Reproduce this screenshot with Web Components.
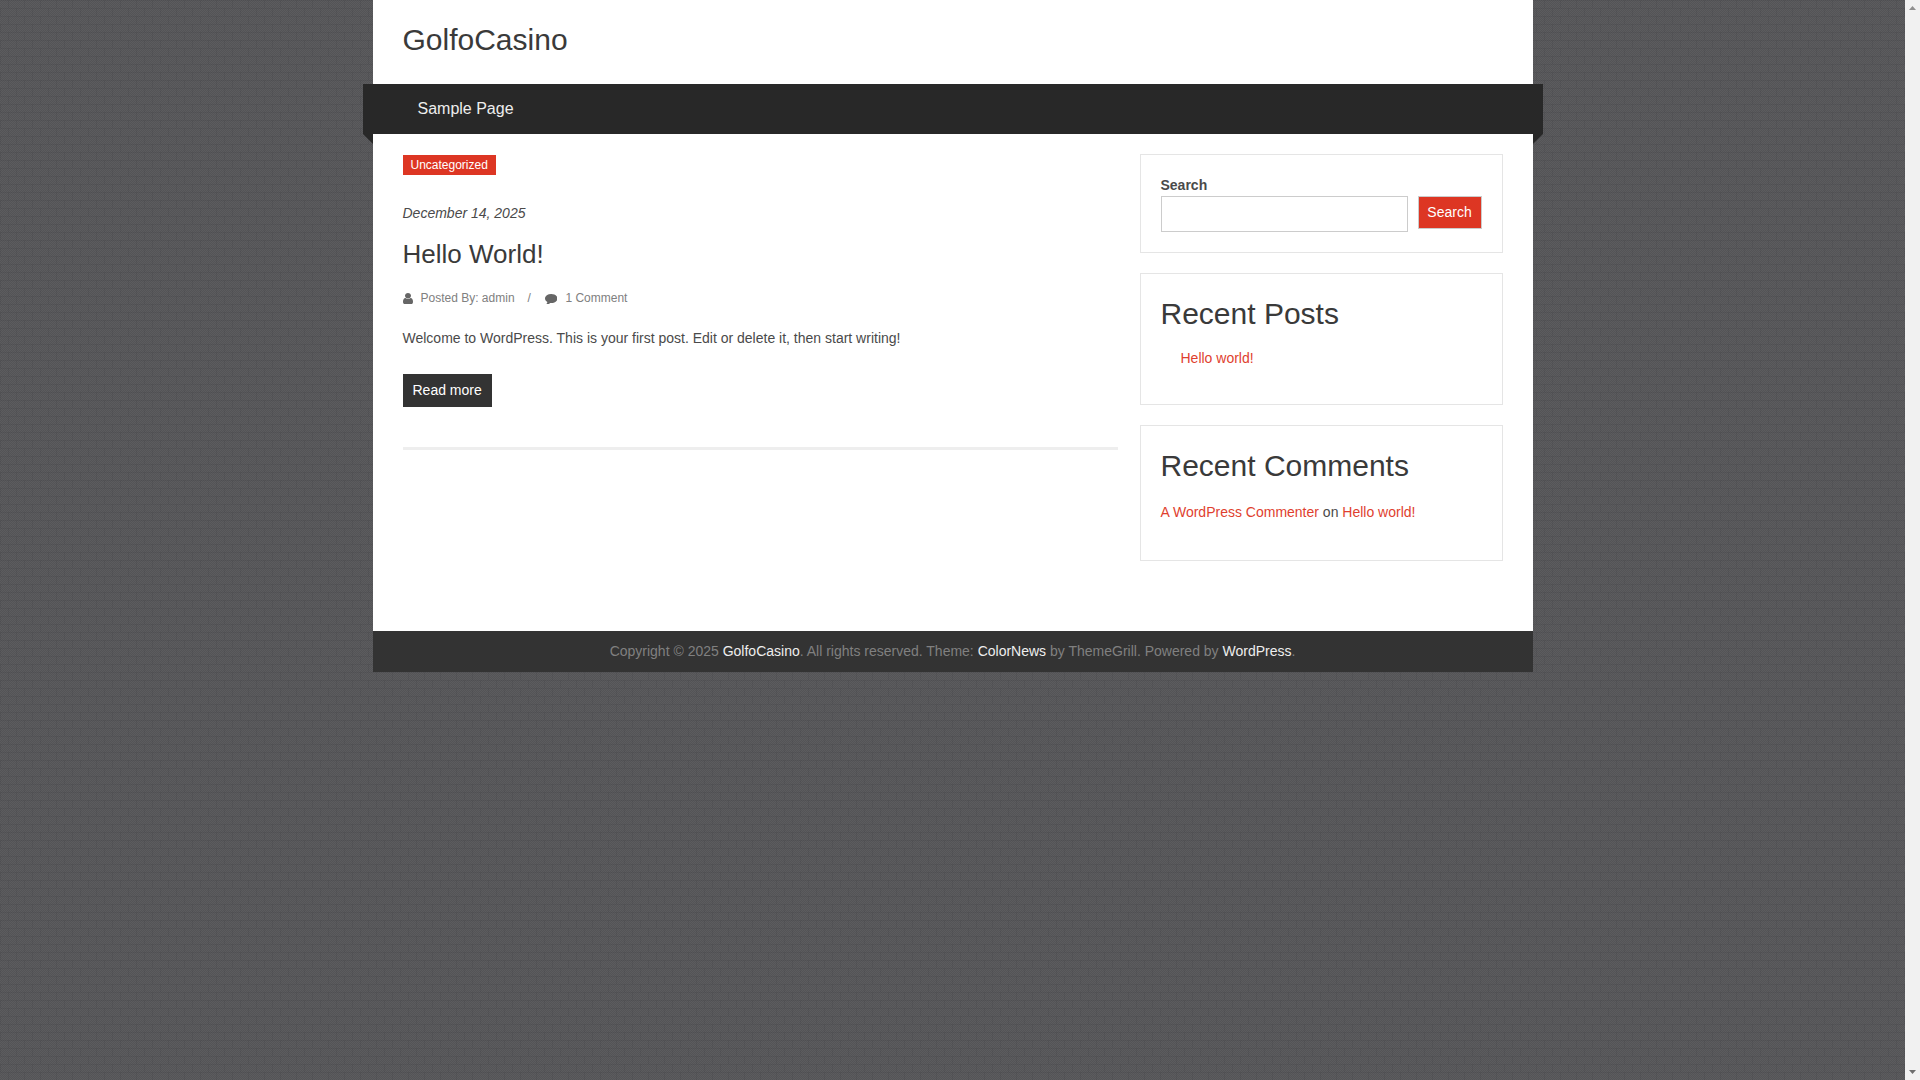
<!DOCTYPE html>
<html lang="en">
<head>
<meta charset="utf-8">
<title>GolfoCasino</title>
<style>
  html, body { margin: 0; padding: 0; height: 100%; overflow: hidden; }
  body { font-family: "Liberation Sans", Arial, sans-serif; }
</style>
</head>
<body>
<template id="page-tpl">
  <style>
    :host {
      display: grid;
      grid-template-columns: 1fr 15px;
      height: 1080px;
      background-color: #5c5c5f;
      background-image:
        conic-gradient(rgba(0,0,0,.09) 25%, transparent 0 50%, rgba(0,0,0,.09) 0 75%, transparent 0),
        linear-gradient(rgba(0,0,0,.05) 1px, transparent 1px),
        conic-gradient(at 1px 8px, transparent 0 180deg, rgba(0,0,0,.05) 180deg 270deg, transparent 270deg),
        conic-gradient(at 1px 8px, transparent 0 180deg, rgba(0,0,0,.05) 180deg 270deg, transparent 270deg);
      background-size: 2px 2px, 16px 8px, 16px 16px, 16px 16px;
      background-position: 0 0, 0 0, 0 0, 8px 8px;
      color: #4a4a4a;
      font: 14px/1.6 "Liberation Sans", Arial, sans-serif;
    }
    .wrap { width: 1160px; margin: 0 auto; background: #fff; align-self: start; }
  </style>
  <div class="wrap"><slot></slot></div>
  <gc-scrollbar></gc-scrollbar>
</template>

<template id="scrollbar-tpl">
  <style>
    :host { display: flex; flex-direction: column; justify-content: space-between; align-items: center; background: #f1f1f1; height: 1080px; }
    svg { display: block; width: 15px; height: 15px; }
  </style>
  <svg viewBox="0 0 15 15"><path d="M4 10 7.500 6 11 10z" fill="#8f8f8f"/></svg>
  <svg viewBox="0 0 15 15"><path d="M4 5 7.500 9 11 5z" fill="#6e6e6e"/></svg>
</template>

<template id="header-tpl">
  <style>
    :host { display: block; }
    .brand { height: 84px; box-sizing: border-box; padding: 0 30px 6px; display: flex; align-items: center; }
    h1 { margin: 0; font-size: 30px; font-weight: 400; line-height: 1.3; color: #3a3a3a; }
    nav { position: relative; margin: 0 -10px; height: 50px; background: #282828; padding: 0 40px; display: flex; align-items: center; }
    nav a { color: #eee; font-size: 16px; padding: 0 15px; text-decoration: none; }
    nav::before, nav::after { content: ""; position: absolute; top: 100%; width: 0; height: 0; border-top: 10px solid #282828; }
    nav::before { left: 0; border-left: 10px solid transparent; }
    nav::after { right: 0; border-right: 10px solid transparent; }
  </style>
  <div class="brand"><h1>GolfoCasino</h1></div>
  <nav><a href="#">Sample Page</a></nav>
</template>

<template id="post-tpl">
  <style>
    :host { display: block; padding-top: 1px; }
    .cat { display: block; width: fit-content; background: #dd3623; color: #fff; font-size: 12px; line-height: 20px; height: 20px; padding: 0 8px; }
    .date { margin-top: 26px; font-style: italic; font-size: 14px; line-height: 24px; }
    h2 { margin: 9px 0 0; font-size: 26px; font-weight: 400; line-height: 40px; color: #3a3a3a; }
    .meta { margin-top: 14px; display: flex; align-items: center; font-size: 12px; line-height: 20px; color: #808080; }
    .meta svg { display: block; fill: #666; }
    .meta .u { width: 10px; height: 11px; margin-right: 8px; }
    .meta .c { width: 12.500px; height: 11px; margin-right: 8px; }
    .meta .sep { margin: 0 14px 0 13px; }
    p { margin: 19px 0 0; line-height: 22px; }
    .more { display: block; width: fit-content; margin-top: 25px; background: #333; color: #fff; text-decoration: none; line-height: 33px; padding: 0 10px; }
    hr { border: 0; height: 3px; background: #eee; margin: 40px 0 0; }
  </style>
  <a class="cat">Uncategorized</a>
  <div class="date">December 14, 2025</div>
  <h2>Hello World!</h2>
  <div class="meta">
    <svg class="u" viewBox="256 128 1280 1536" preserveAspectRatio="none"><path d="M1536 1399q0 109-62.500 187t-150.500 78h-854q-88 0-150.500-78t-62.500-187q0-85 8.500-160.500t31.500-152 58.500-131 94-89 134.500-34.500q131 128 313 128t313-128q76 0 134.500 34.500t94 89 58.500 131 31.500 152 8.500 160.500zm-256-887q0 159-112.500 271.500t-271.500 112.500-271.500-112.500-112.500-271.500 112.500-271.500 271.500-112.500 271.500 112.500 112.500 271.500z"/></svg>
    <span>Posted By: admin</span>
    <span class="sep">/</span>
    <svg class="c" viewBox="0 128 1792 1536" preserveAspectRatio="none"><path d="M1792 896q0 174-120 321.500t-326 233-450 85.500q-70 0-145-8-198 175-460 242-49 14-114 22-17 2-30.500-9t-17.500-29v-1q-3-4-.500-12t2-10 4.500-9.500l6-9 7-8.500 8-9q7-8 31-34.500t34.500-38 31-39.500 32.500-51 27-59 26-76q-157-89-247.500-220t-90.500-281q0-130 71-248.500t191-204.500 286-136.500 348-50.500q244 0 450 85.500t326 233 120 321.500z"/></svg>
    <span>1 Comment</span>
  </div>
  <p>Welcome to WordPress. This is your first post. Edit or delete it, then start writing!</p>
  <a class="more" href="#">Read more</a>
  <hr>
</template>

<template id="widget-tpl">
  <style>
    :host { display: block; border: 1px solid #e5e5e5; padding: 20px; box-sizing: border-box; }
  </style>
  <slot></slot>
</template>

<template id="search-tpl">
  <style>
    :host { display: block; }
    label { display: block; font-weight: 700; font-size: 14px; line-height: 21px; }
    .row { display: flex; justify-content: space-between; align-items: flex-start; }
    .field { width: 247px; height: 36px; box-sizing: border-box; border: 1px solid #ccc; background: #fff; }
    button { width: 64px; height: 33px; box-sizing: border-box; border: 1px solid #ccc; background: #dd3623; color: #fff; font: 14px "Liberation Sans", Arial, sans-serif; padding: 0 0 1px; }
  </style>
  <label>Search</label>
  <div class="row"><div class="field"></div><button>Search</button></div>
</template>

<template id="title-tpl">
  <style>
    :host { display: block; font-size: 30px; line-height: 40px; color: #3a3a3a; }
  </style>
  <slot></slot>
</template>

<template id="footer-tpl">
  <style>
    :host { display: block; height: 41px; background: #333; color: #808080; text-align: center; font-size: 14px; line-height: 40px; }
    a { color: #eee; text-decoration: none; }
  </style>
  Copyright © 2025 <a>GolfoCasino</a>. All rights reserved. Theme: <a>ColorNews</a> by ThemeGrill. Powered by <a>WordPress</a>.
</template>

<script>
  function defineFromTemplate(name, id) {
    customElements.define(name, class extends HTMLElement {
      constructor() {
        super();
        this.attachShadow({mode: 'open'});
        this.shadowRoot.appendChild(document.getElementById(id).content.cloneNode(true));
      }
    });
  }

  defineFromTemplate('gc-page', 'page-tpl');
  defineFromTemplate('gc-scrollbar', 'scrollbar-tpl');
  defineFromTemplate('gc-header', 'header-tpl');
  defineFromTemplate('gc-post', 'post-tpl');
  defineFromTemplate('gc-widget', 'widget-tpl');
  defineFromTemplate('gc-search', 'search-tpl');
  defineFromTemplate('gc-title', 'title-tpl');
  defineFromTemplate('gc-footer', 'footer-tpl');

  class Layout extends HTMLElement {
    constructor() {
      super();
      this.attachShadow({mode: 'open'});
      this.shadowRoot.innerHTML = `
        <style>
          :host { display: flex; justify-content: space-between; align-items: flex-start; padding: 20px 30px 70px; }
          .main { width: 715px; }
          .side { width: 363px; display: flex; flex-direction: column; gap: 20px; }
        </style>
        <div class="main"><slot name="main"></slot></div>
        <div class="side"><slot name="side"></slot></div>
      `;
    }
  }
  customElements.define('gc-layout', Layout);
</script>

<gc-page>
  <gc-header></gc-header>
  <gc-layout>
    <gc-post slot="main"></gc-post>
    <gc-widget slot="side"><gc-search></gc-search></gc-widget>
    <gc-widget slot="side">
      <gc-title>Recent Posts</gc-title>
      <div style="margin:13px 0 15px 20px;line-height:22px;color:#e03f2f">Hello world!</div>
    </gc-widget>
    <gc-widget slot="side">
      <gc-title>Recent Comments</gc-title>
      <div style="margin:15px 0 17px;line-height:22px"><span style="color:#e03f2f">A WordPress Commenter</span> on <span style="color:#e03f2f">Hello world!</span></div>
    </gc-widget>
  </gc-layout>
  <gc-footer></gc-footer>
</gc-page>
</body>
</html>
